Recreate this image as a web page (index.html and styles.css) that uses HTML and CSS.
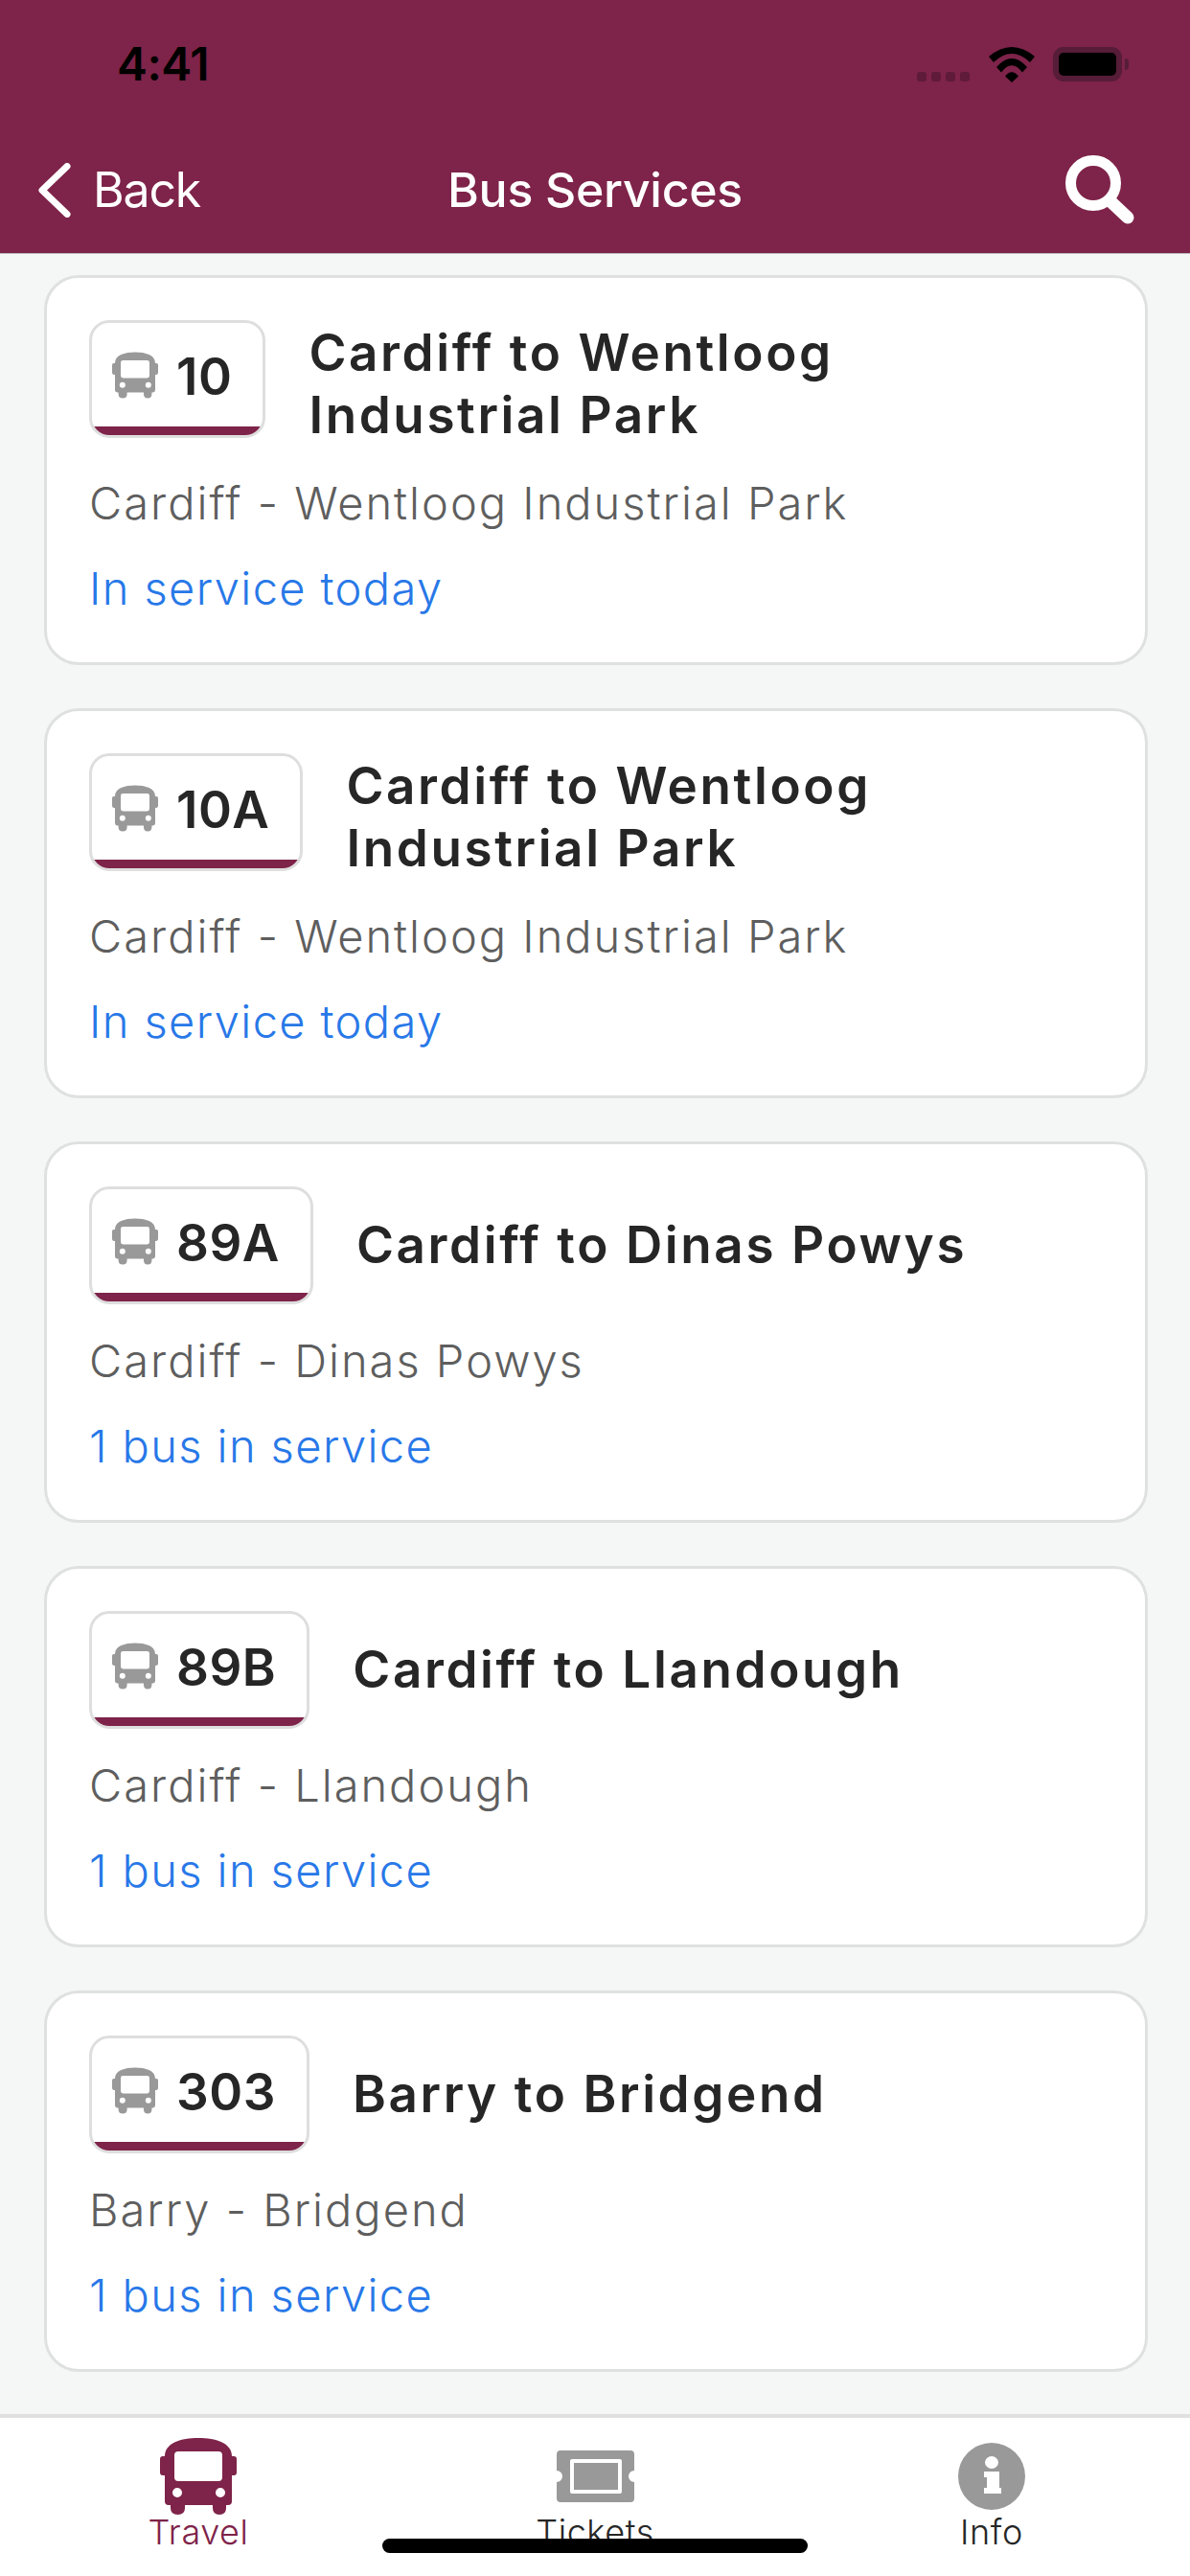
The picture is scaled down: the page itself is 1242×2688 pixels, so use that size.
FILE: index.html
```html
<!DOCTYPE html>
<html lang="en">
<head>
<meta charset="utf-8">
<title>Bus Services</title>
<link rel="stylesheet" href="styles.css">
</head>
<body>
<svg class="sprite" aria-hidden="true">
  <symbol id="bus" viewBox="0 0 80 80">
    <path fill-rule="evenodd" d="M5 19 C5 5 22 0 40 0 S75 5 75 19 H77 Q80 19 80 22 V36 Q80 39 77 39 H75 V66 Q75 70 71 70 H69 V73 Q69 80 62 80 Q55 80 55 73 V70 H26 V73 Q26 80 18.500 80 Q11 80 11 73 V70 H9 Q5 70 5 66 V39 H3 Q0 39 0 36 V22 Q0 19 3 19 Z M19 14 H61 Q65 14 65 18 V41 Q65 45 61 45 H19 Q15 45 15 41 V18 Q15 14 19 14 Z M18 52 A5 5 0 1 0 18 62 A5 5 0 1 0 18 52 Z M63 52 A5 5 0 1 0 63 62 A5 5 0 1 0 63 52 Z"/>
  </symbol>
</svg>
<div class="screen">
  <header class="appbar">
    <div class="statusbar">
      <span class="time">4:41</span>
      <div class="status-icons">
        <div class="signal"><i></i><i></i><i></i><i></i></div>
        <svg class="wifi" viewBox="0 0 48 37"><path d="M0 10 Q24 -10 48 10 L43 16 Q24 -2 5 16 Z M8 21 Q24 3 40 21 L35 26.500 Q24 12 13 26.500 Z M17 30.500 Q24 22 31 30.500 L24 37 Z"/></svg>
        <div class="battery"><div class="battery-fill"></div></div>
        <div class="battery-nub"></div>
      </div>
    </div>
    <nav class="navbar">
      <div class="back">
        <svg class="chevron" viewBox="0 0 34 57"><path d="M30 3.500 L4 28.500 L30 53.500"/></svg>
        <span>Back</span>
      </div>
      <h1 class="nav-title">Bus Services</h1>
      <svg class="search" viewBox="0 0 72 72"><circle cx="29" cy="29" r="23.500"/><path d="M48 49 L65 65"/></svg>
    </nav>
  </header>

  <main class="list">
    <article class="card">
      <div class="head">
        <div class="badge"><svg class="bus-icon"><use href="#bus"/></svg><span class="num">10</span></div>
        <h2 class="title">Cardiff to Wentloog<br>Industrial Park</h2>
      </div>
      <p class="sub">Cardiff - Wentloog Industrial Park</p>
      <p class="state">In service today</p>
    </article>
    <article class="card">
      <div class="head">
        <div class="badge"><svg class="bus-icon"><use href="#bus"/></svg><span class="num">10A</span></div>
        <h2 class="title">Cardiff to Wentloog<br>Industrial Park</h2>
      </div>
      <p class="sub">Cardiff - Wentloog Industrial Park</p>
      <p class="state">In service today</p>
    </article>
    <article class="card">
      <div class="head">
        <div class="badge"><svg class="bus-icon"><use href="#bus"/></svg><span class="num">89A</span></div>
        <h2 class="title single">Cardiff to Dinas Powys</h2>
      </div>
      <p class="sub">Cardiff - Dinas Powys</p>
      <p class="state">1 bus in service</p>
    </article>
    <article class="card">
      <div class="head">
        <div class="badge"><svg class="bus-icon"><use href="#bus"/></svg><span class="num">89B</span></div>
        <h2 class="title single">Cardiff to Llandough</h2>
      </div>
      <p class="sub">Cardiff - Llandough</p>
      <p class="state">1 bus in service</p>
    </article>
    <article class="card">
      <div class="head">
        <div class="badge"><svg class="bus-icon"><use href="#bus"/></svg><span class="num">303</span></div>
        <h2 class="title single">Barry to Bridgend</h2>
      </div>
      <p class="sub">Barry - Bridgend</p>
      <p class="state">1 bus in service</p>
    </article>
  </main>

  <footer class="tabbar">
    <div class="tab active">
      <div class="tab-icon"><svg class="tab-bus"><use href="#bus"/></svg></div>
      <span class="tab-label">Travel</span>
    </div>
    <div class="tab">
      <div class="tab-icon"><svg class="tab-ticket" viewBox="0 0 81 54"><path fill-rule="evenodd" d="M4 0 H77 Q81 0 81 4 V21 A6 6 0 0 0 81 33 V50 Q81 54 77 54 H4 Q0 54 0 50 V33 A6 6 0 0 0 0 21 V4 Q0 0 4 0 Z M16 9 H66 Q68 9 68 11 V43 Q68 45 66 45 H16 Q14 45 14 43 V11 Q14 9 16 9 Z M18 13 V41 H64 V13 Z"/></svg></div>
      <span class="tab-label">Tickets</span>
    </div>
    <div class="tab">
      <div class="tab-icon"><svg class="tab-info" viewBox="0 0 70 70"><path fill-rule="evenodd" d="M35 0 A35 35 0 1 0 35 70 A35 35 0 1 0 35 0 Z M35 14 A7 6.500 0 1 1 35 27 A7 6.500 0 1 1 35 14 Z M27 30 H43 V47 H45 V53 H27 V47 H30 V36 H27 Z"/></svg></div>
      <span class="tab-label">Info</span>
    </div>
  </footer>
  <div class="home-indicator"></div>
</div>
</body>
</html>
```
FILE: styles.css
```css
* { box-sizing: border-box; margin: 0; padding: 0; }
html, body { width: 1242px; height: 2688px; overflow: hidden; }
body { font-family: Inter, "Noto Sans", sans-serif; background: #f5f7f6; }
.sprite { display: none; }
.screen { position: relative; width: 1242px; height: 2688px; display: flex; flex-direction: column; }

.appbar { height: 265px; background: #7e2349; border-bottom: 1px solid #b9b9b9; flex: none; }
.statusbar { height: 132px; padding: 49px 64px 0 122px; display: flex; justify-content: space-between; align-items: flex-start; }
.time { font-weight: 600; font-size: 48px; line-height: 36px; letter-spacing: -0.5px; color: #000; }
.status-icons { display: flex; align-items: flex-start; }
.signal { display: flex; gap: 5px; margin-top: 26px; margin-right: 20px; }
.signal i { width: 10px; height: 10px; border-radius: 3px; background: #5f1b39; }
.wifi { width: 48px; height: 37px; fill: #000; margin-right: 19px; }
.battery { width: 72px; height: 36px; border: 6px solid #561c38; border-radius: 11px; }
.battery-fill { width: 100%; height: 100%; background: #000; border-radius: 5px; }
.battery-nub { width: 4px; height: 12px; margin: 12px 0 0 3px; background: #561c38; border-radius: 0 4px 4px 0; }

.navbar { position: relative; display: flex; align-items: center; justify-content: space-between; height: 130px; padding: 0 58px 0 40px; color: #fff; margin-top: 1px; }
.back { display: flex; align-items: center; gap: 23px; font-size: 50px; line-height: 60px; letter-spacing: -1.2px; }
.chevron { width: 34px; height: 57px; fill: none; stroke: #fff; stroke-width: 7; stroke-linecap: round; stroke-linejoin: round; }
.nav-title { position: absolute; left: 0; right: 0; text-align: center; font-size: 50px; line-height: 60px; font-weight: 500; letter-spacing: -0.3px; }
.search { width: 72px; height: 72px; fill: none; stroke: #fff; }
.search circle { stroke-width: 11; }
.search path { stroke-width: 13; stroke-linecap: round; }

.list { flex: 1; min-height: 0; padding: 22px 44px 0 46px; display: flex; flex-direction: column; gap: 45px; }
.card { background: #fff; border: 3px solid #dfe1e1; border-radius: 36px; padding: 44px 44px 49px; }
.head { display: flex; align-items: flex-start; gap: 45px; }
.badge { flex: none; height: 123px; display: flex; align-items: flex-start; gap: 19px; padding: 30px 32px 0 21px; border: 3px solid #dedede; border-radius: 21px; background: #fff; position: relative; overflow: hidden; }
.badge::after { content: ""; position: absolute; left: 0; right: 0; bottom: 0; height: 9px; background: #7e2349; }
.bus-icon { width: 48px; height: 49px; fill: #999; flex: none; }
.num { font-size: 53px; line-height: 52px; font-weight: 600; color: #262626; letter-spacing: 0.5px; }
.title { margin-top: 2px; font-size: 53px; line-height: 65px; font-weight: 600; color: #262626; letter-spacing: 2.6px; }
.title.single { align-self: center; margin-top: 0; }
.sub { margin-top: 31px; font-size: 47px; line-height: 56px; font-weight: 300; color: #5e5e5e; letter-spacing: 2px; }
.state { margin-top: 33px; font-size: 47px; line-height: 56px; font-weight: 300; color: #2878e8; letter-spacing: 1.4px; }

.tabbar { flex: none; height: 169px; background: #fff; border-top: 4px solid #e0e0e0; display: grid; grid-template-columns: repeat(3, 1fr); }
.tab { display: flex; flex-direction: column; align-items: center; color: #262626; }
.tab.active { color: #7e2349; }
.tab-icon { height: 84px; margin-top: 19px; display: flex; align-items: center; justify-content: center; }
.tab-bus { width: 80px; height: 80px; fill: #7e2349; }
.tab-ticket { width: 81px; height: 54px; fill: #999; }
.tab-info { width: 70px; height: 70px; fill: #999; }
.tab-label { font-size: 36px; line-height: 40px; margin-top: -4px; letter-spacing: 0.6px; font-weight: 300; }
.home-indicator { position: absolute; left: 399px; top: 2649px; width: 444px; height: 15px; border-radius: 8px; background: #000; }
```
